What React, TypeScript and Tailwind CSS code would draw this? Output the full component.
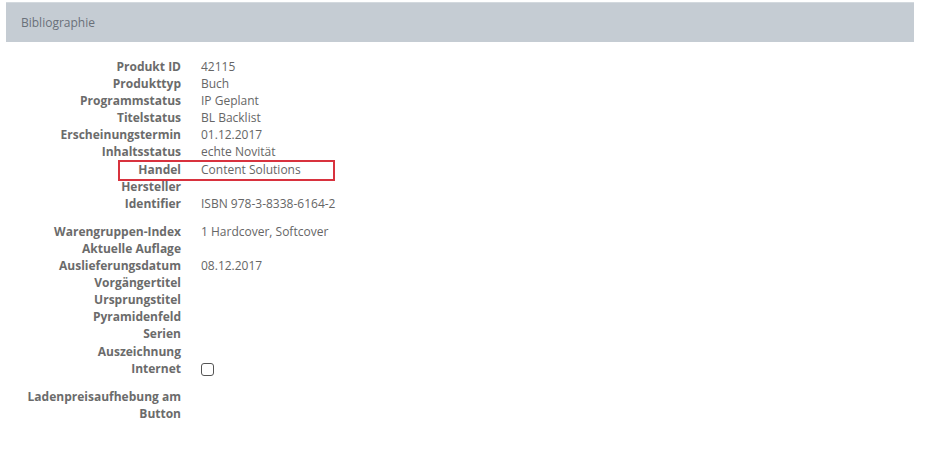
import React from "react";

type Row = { label: string; value?: string; checkbox?: boolean; highlight?: boolean };

const groups: Row[][] = [
  [
    { label: "Produkt ID", value: "42115" },
    { label: "Produkttyp", value: "Buch" },
    { label: "Programmstatus", value: "IP Geplant" },
    { label: "Titelstatus", value: "BL Backlist" },
    { label: "Erscheinungstermin", value: "01.12.2017" },
    { label: "Inhaltsstatus", value: "echte Novität" },
    { label: "Handel", value: "Content Solutions", highlight: true },
    { label: "Hersteller" },
    { label: "Identifier", value: "ISBN 978-3-8338-6164-2" },
  ],
  [
    { label: "Warengruppen-Index", value: "1 Hardcover, Softcover" },
    { label: "Aktuelle Auflage" },
    { label: "Auslieferungsdatum", value: "08.12.2017" },
    { label: "Vorgängertitel" },
    { label: "Ursprungstitel" },
    { label: "Pyramidenfeld" },
    { label: "Serien" },
    { label: "Auszeichnung" },
    { label: "Internet", checkbox: true },
  ],
  [{ label: "Ladenpreisaufhebung am Button" }],
];

function RowView({ r }: { r: Row }) {
  return (
    <div className="relative flex leading-[17.1px]">
      {r.highlight && (
        <div className="absolute left-[118px] top-[-1px] w-[217px] h-[21px] border-2 border-[#d8323e] pointer-events-none" />
      )}
      <div className="w-[181px] shrink-0 text-right font-bold text-[#6b6b6b] pl-[20px]">{r.label}</div>
      <div className="pl-[20px] text-[#666666]">
        {r.checkbox ? (
          <div className="mt-[3px] w-[13px] h-[13px] border border-[#555] rounded-[3px] bg-white" />
        ) : (
          r.value ?? ""
        )}
      </div>
    </div>
  );
}

export default function App() {
  return (
    <div
      className="w-[928px] h-[456px] bg-white text-[12px]"
      style={{ fontFamily: '"Open Sans", "Liberation Sans", sans-serif' }}
    >
      <div className="pt-[2px] pl-[6px] pr-[14px]">
        <div className="h-[40px] bg-[#c5ccd3] border-t border-[#d3d9de] flex items-center pl-[15px] text-[#6a7079]">
          Bibliographie
        </div>
      </div>
      <div className="pt-[16px] flex flex-col gap-[11px]">
        {groups.map((g, i) => (
          <div key={i} className="flex flex-col">
            {g.map((r) => (
              <RowView key={r.label} r={r} />
            ))}
          </div>
        ))}
      </div>
    </div>
  );
}
